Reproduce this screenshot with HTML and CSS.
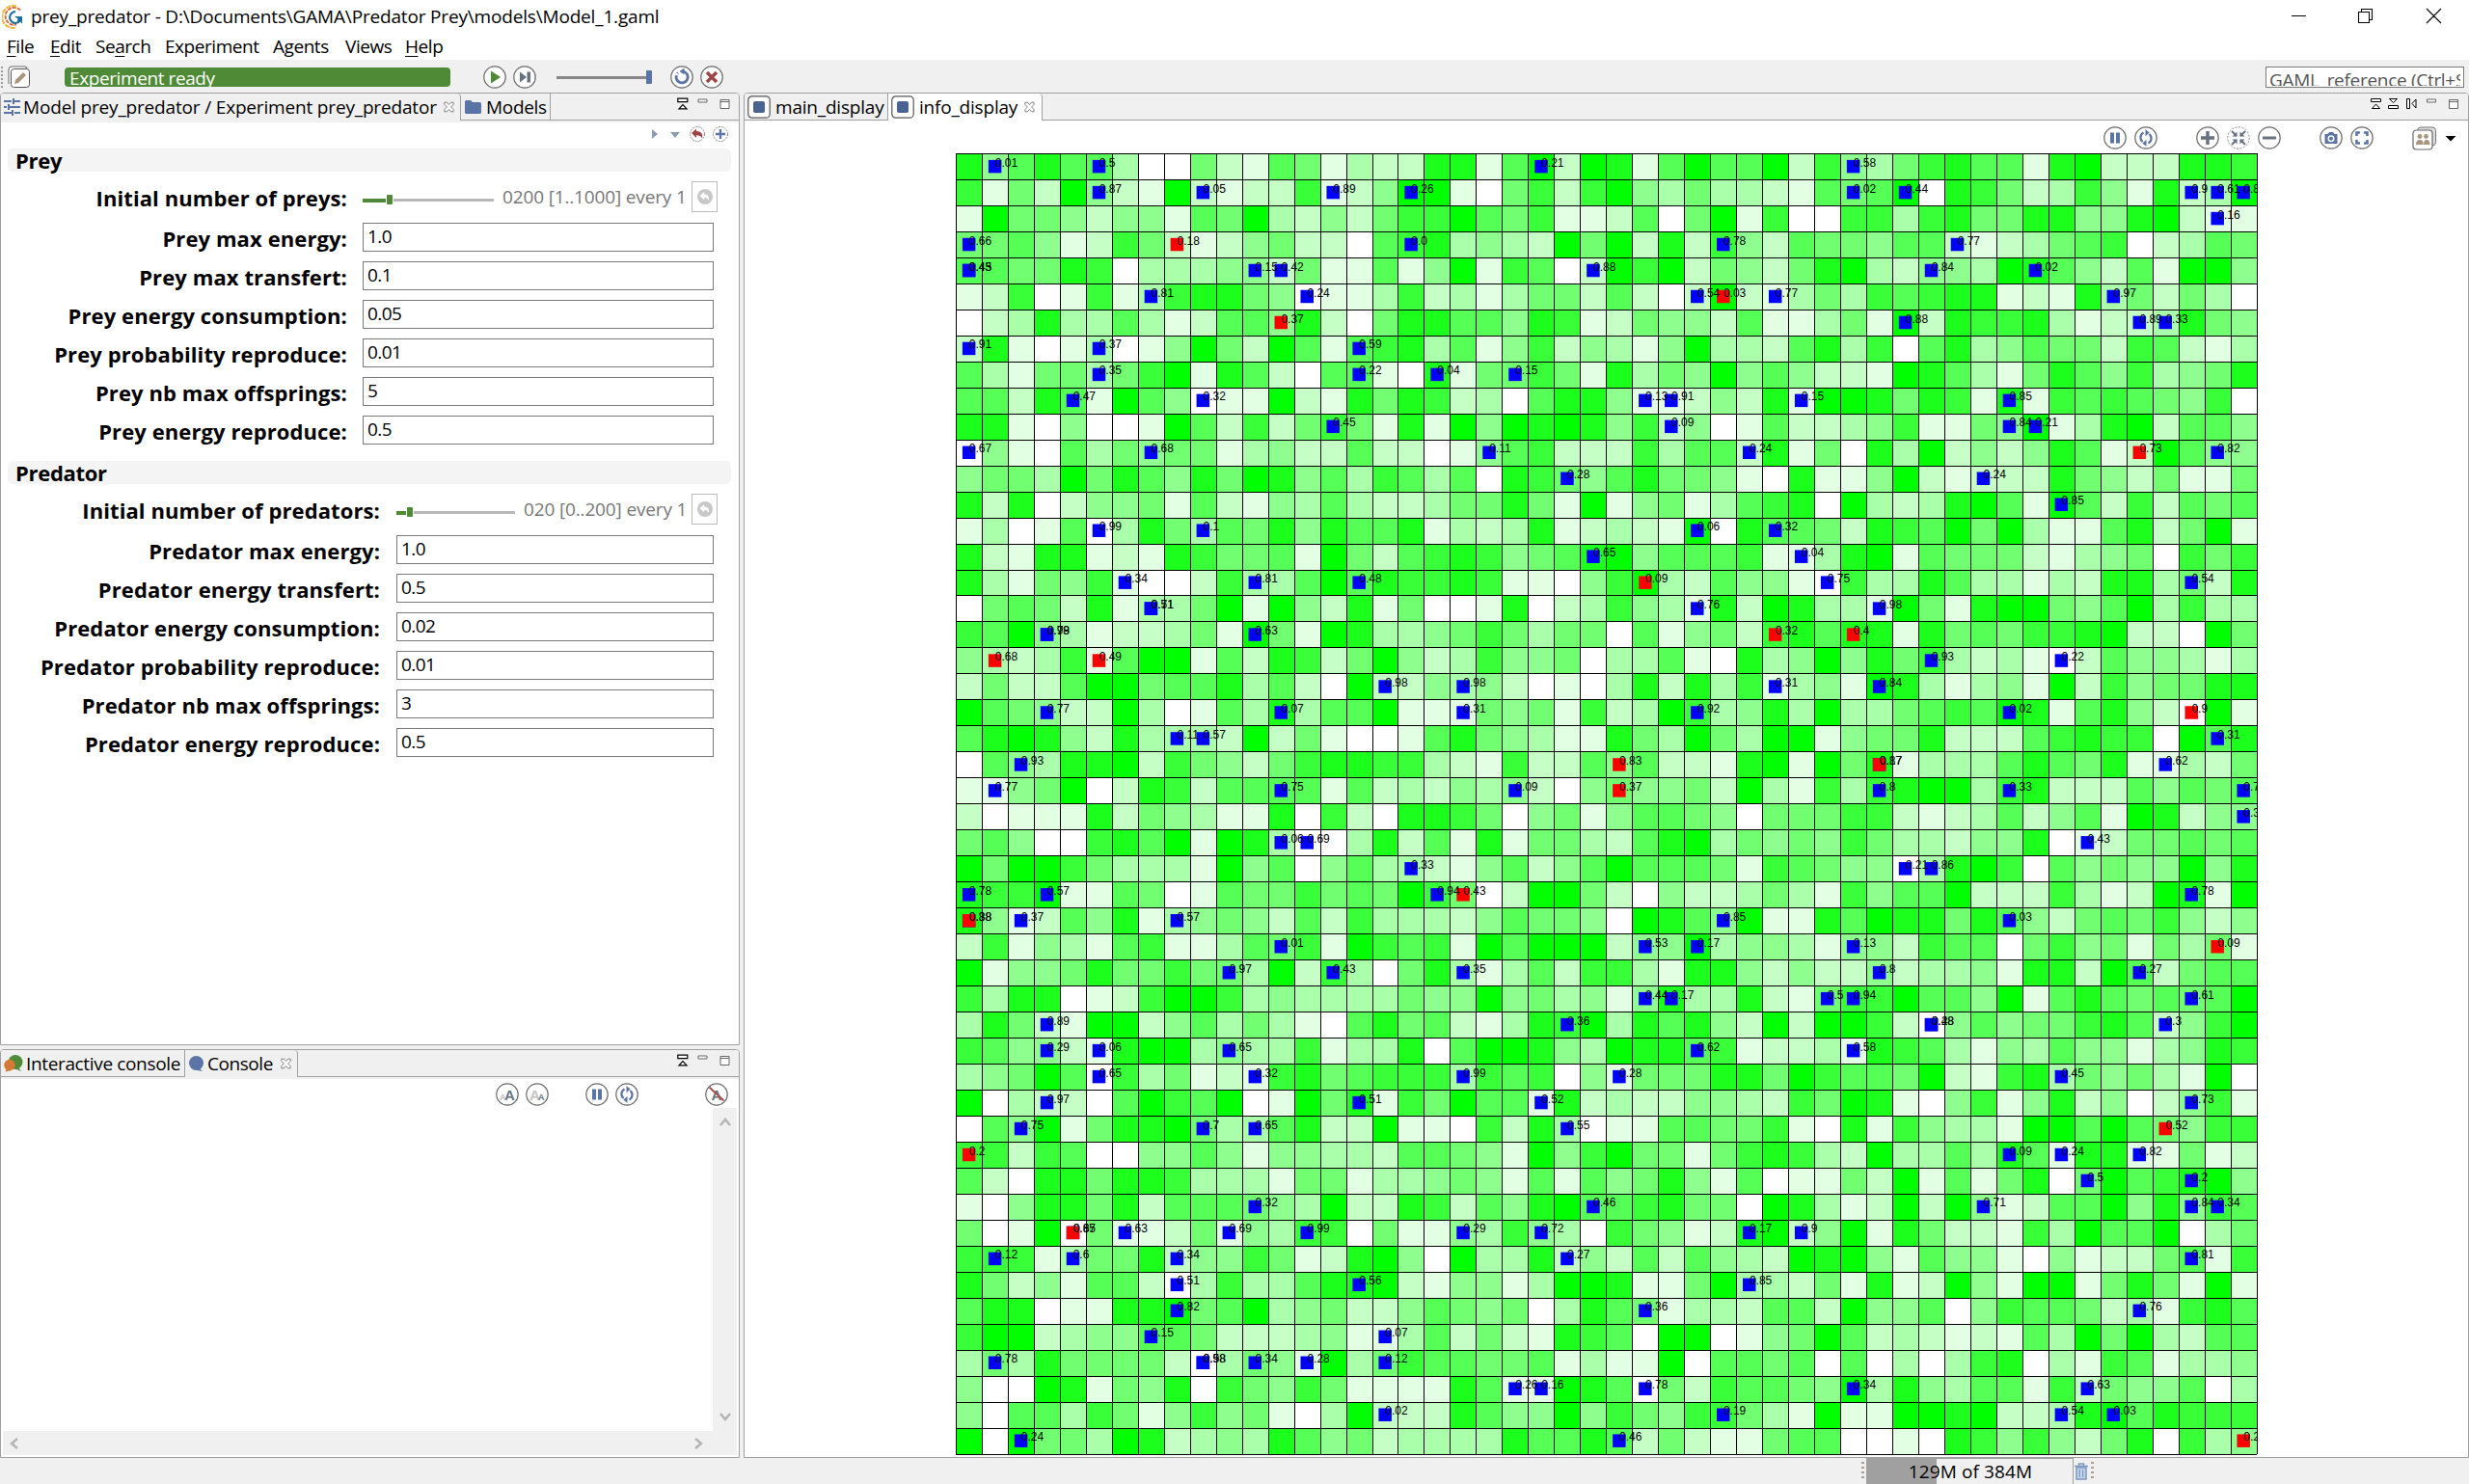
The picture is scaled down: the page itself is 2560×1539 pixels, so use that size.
FILE: index.html
```html
<!DOCTYPE html>
<html lang="en">
<head>
<meta charset="utf-8">
<title>prey_predator</title>
<link rel="stylesheet" href="styles.css">
</head>
<body>
<svg class="defs" width="0" height="0">
  <symbol id="ring" viewBox="0 0 24 24"><circle cx="12" cy="12" r="11.2" fill="#fff" stroke="#6b6b6b" stroke-width="1.2"/></symbol>
  <symbol id="pause" viewBox="0 0 24 24"><use href="#ring"/><path d="M7 6.5h4v11H7zM13 6.5h4v11h-4z" fill="#5a75a5"/></symbol>
  <symbol id="sync" viewBox="0 0 24 24"><use href="#ring"/><path d="M9.5 6.6A5.6 5.6 0 0 0 8.6 16M14.5 17.4A5.6 5.6 0 0 0 15.4 8" fill="none" stroke="#5a75a5" stroke-width="2.2"/><path d="M11.5 3v7.2L15.6 6.4zM12.5 21v-7.2L8.4 17.6z" fill="#5a75a5"/></symbol>
  <symbol id="x" viewBox="0 0 12 12"><path d="M1 .7h2.6L6 3.4 8.4.7H11v2.5L8.3 6 11 8.8v2.5H8.4L6 8.6l-2.4 2.7H1V8.8L3.7 6 1 3.2z" fill="#fff" stroke="#777" stroke-width="1"/></symbol>
  <symbol id="stackup" viewBox="0 0 12 16"><path d="M.8 1.2h10v3.4H.8zM6 7.6l4 4.2H2z" fill="#fff" stroke="#000" stroke-width="1.2"/></symbol>
  <symbol id="min" viewBox="0 0 12 16"><path d="M1 2h9v3H1z" fill="#fff" stroke="#666"/></symbol>
  <symbol id="max" viewBox="0 0 12 16"><path d="M1 2.5h9v9H1zM1 4.5h9" fill="#fff" stroke="#666"/></symbol>
  <symbol id="disp" viewBox="0 0 24 24"><rect x=".8" y=".8" width="22.4" height="22.4" rx="4" fill="#fff" stroke="#555" stroke-width="1.2"/><rect x="6" y="6" width="12" height="12" rx="2" fill="#4a6391"/></symbol>
  <symbol id="undo" viewBox="0 0 18 18"><circle cx="9" cy="9" r="8" fill="#c8c8c8"/><path d="M3.5 8L8.2 4v2.5c4 0 5.6 2.5 4.6 6.8-.7-2.6-2-3.3-4.6-3.3v2.5z" fill="#fff"/></symbol>
</svg>

<header class="title">
  <svg class="logo" width="24" height="29" viewBox="0 0 24 29">
    <path d="M15 3.500A11.500 11.500 0 1 0 15 25.500" fill="none" stroke="#f3b33d" stroke-width="2" stroke-dasharray="5 1"/>
    <path d="M19 7.500a9 9 0 1 0-4 15" fill="none" stroke="#e0662f" stroke-width="1.800" stroke-dasharray="4 1"/>
    <path d="M14 9a6 6 0 1 0 5 9.500" fill="none" stroke="#1d6f9f" stroke-width="2"/>
    <path d="M13 14h8v7.500l-2.500-2.500-3 1.500 1-4z" fill="#1d6f9f"/>
  </svg>
  <span class="cap">prey_predator - D:\Documents\GAMA\Predator Prey\models\Model_1.gaml</span>
  <svg class="win" width="170" height="18" viewBox="0 0 170 18"><path d="M1 8.500h15M70.500 4.500h11v11h-11zM73.500 4.500v-3h11v11h-3M141 1l15 15M156 1l-15 15" fill="none" stroke="#000" stroke-width="1.100"/></svg>
</header>
<nav class="menu"><span class="m1"><u>F</u>ile</span><span class="m2"><u>E</u>dit</span><span class="m3">Se<u>a</u>rch</span><span class="m4">Experiment</span><span class="m5">Agents</span><span class="m6">Views</span><span class="m7"><u>H</u>elp</span></nav>

<div class="tools">
  <svg class="edit" width="34" height="26" viewBox="0 0 34 26"><path d="M2 2v22" stroke="#999" stroke-width="2" stroke-dasharray="2 2"/><path d="M9 20V5q0-3 3-3h13q3 0 3 2" fill="#fff" stroke="#666"/><rect x="11.500" y="4.500" width="19" height="19" rx="3" fill="#fff" stroke="#555"/><path d="M15 20l1-4 8-8 3 3-8 8z" fill="#a8957c"/></svg>
  <div class="ready"><span>Experiment ready</span></div>
  <svg class="b-play" width="24" height="24"><use href="#ring"/><path d="M8 5.500l10 6.500-10 6.500z" fill="#4f8a36"/></svg>
  <svg class="b-step" width="24" height="24"><use href="#ring"/><path d="M7 6.500l7 5.500-7 5.500zM14.500 6.500h3.500v11h-3.500z" fill="#66727f"/></svg>
  <div class="speed"></div>
  <svg class="b-reload" width="24" height="24"><use href="#ring"/><path d="M13.500 6a6 6 0 1 1-5.500 1.500" fill="none" stroke="#5a75a5" stroke-width="2.800" stroke-dasharray="28 2"/><path d="M14.500 2.500v7L9.500 6z" fill="#5a75a5"/></svg>
  <svg class="b-close" width="24" height="24"><use href="#ring"/><path d="M7 7l10 10M17 7L7 17" stroke="#a04545" stroke-width="3.400"/></svg>
  <div class="search"><span>GAML_reference (Ctrl+Shift+H)</span></div>
</div>

<main>
  <div class="left">
    <section class="params">
      <div class="tabs">
        <div class="tab on t-model"><svg width="17" height="18" viewBox="0 0 17 18"><path d="M0 3h8M11 3h6M0 9h3M6 9h11M0 15h8M11 15h6M10 0v6M5 6v6M9 12v6" stroke="#5a75a5" stroke-width="2"/></svg><span class="t1">Model prey_predator / Experiment prey_predator</span><svg width="11" height="12"><use href="#x"/></svg></div>
        <div class="tab t-models"><svg width="17" height="14" viewBox="0 0 17 14"><path d="M0 1.500Q0 0 1.500 0H6l2 2h7.500Q17 2 17 3.500v9q0 1.500-1.500 1.500h-14Q0 14 0 12.500z" fill="#5a75a5"/></svg><span class="t2">Models</span></div>
        <div class="fill"><svg width="12" height="16"><use href="#stackup"/></svg><svg class="g1" width="12" height="16"><use href="#min"/></svg><svg class="g2" width="12" height="16"><use href="#max"/></svg></div>
      </div>
      <div class="vtools"><svg width="82" height="18" viewBox="0 0 82 18"><path d="M2 4l6 5-6 5zM21 7h10l-5 6z" fill="#8d9caf"/><circle cx="49" cy="9" r="7.500" fill="#fff" stroke="#888" stroke-dasharray="2 1"/><path d="M43 8l5-4.500V6c5 0 7 3 6 7.500-1-2.500-3-3.200-6-3.200V13z" fill="#a04545"/><circle cx="73" cy="9" r="7.500" fill="#fff" stroke="#888" stroke-dasharray="2 1"/><path d="M73 4v10M68 9h10" stroke="#5a75a5" stroke-width="2.400"/></svg></div>
      <div class="group"><span>Prey</span></div>
      <div class="form prey">
        <label class="srow">Initial number of preys:</label><div class="slide"><i class="bar"><b></b></i><em>0200 [1..1000] every 1</em><div class="reset"><svg width="18" height="18"><use href="#undo"/></svg></div></div>
        <label>Prey max energy:</label><div class="in">1.0</div>
        <label>Prey max transfert:</label><div class="in">0.1</div>
        <label>Prey energy consumption:</label><div class="in">0.05</div>
        <label>Prey probability reproduce:</label><div class="in">0.01</div>
        <label>Prey nb max offsprings:</label><div class="in">5</div>
        <label>Prey energy reproduce:</label><div class="in">0.5</div>
      </div>
      <div class="group second"><span>Predator</span></div>
      <div class="form pred">
        <label class="srow">Initial number of predators:</label><div class="slide"><i class="bar"><b></b></i><em>020 [0..200] every 1</em><div class="reset"><svg width="18" height="18"><use href="#undo"/></svg></div></div>
        <label>Predator max energy:</label><div class="in">1.0</div>
        <label>Predator energy transfert:</label><div class="in">0.5</div>
        <label>Predator energy consumption:</label><div class="in">0.02</div>
        <label>Predator probability reproduce:</label><div class="in">0.01</div>
        <label>Predator nb max offsprings:</label><div class="in">3</div>
        <label>Predator energy reproduce:</label><div class="in">0.5</div>
      </div>
    </section>
    <section class="console">
      <div class="tabs">
        <div class="tab t-int"><svg width="20" height="18" viewBox="0 0 20 18"><circle cx="12" cy="7.500" r="7.500" fill="#4f8a36"/><path d="M14 12l4 5-7-3z" fill="#4f8a36"/><circle cx="6" cy="10.500" r="5.800" fill="#d57a35"/><path d="M3 13l-1.500 4.500L8 16z" fill="#d57a35"/></svg><span class="t3">Interactive console</span></div>
        <div class="tab on t-con"><svg width="17" height="16" viewBox="0 0 17 16"><circle cx="8.500" cy="7.500" r="7.500" fill="#5a75a5"/><path d="M11 12l4 4-8-1.500z" fill="#5a75a5"/></svg><span class="t4">Console</span><svg width="11" height="12"><use href="#x"/></svg></div>
        <div class="fill"><svg width="12" height="16"><use href="#stackup"/></svg><svg class="g1" width="12" height="16"><use href="#min"/></svg><svg class="g2" width="12" height="16"><use href="#max"/></svg></div>
      </div>
      <div class="ctools">
        <svg class="c1" width="24" height="24"><use href="#ring"/><text x="9" y="18" font-size="15" fill="#66727f">A</text><text x="4" y="18" font-size="9" fill="#bbb">A</text></svg>
        <svg class="c2" width="24" height="24"><use href="#ring"/><text x="4" y="18" font-size="15" fill="#c4c4c4">A</text><text x="13" y="18" font-size="9" fill="#66727f">A</text></svg>
        <svg class="c3" width="24" height="24"><use href="#pause"/></svg>
        <svg class="c2" width="24" height="24"><use href="#sync"/></svg>
        <svg class="c4" width="24" height="24"><use href="#ring"/><text x="6.500" y="18" font-size="15" fill="#66727f">A</text><path d="M4.500 4.500l15 14" stroke="#a85050" stroke-width="2"/></svg>
      </div>
      <div class="cbody">
        <div class="ctext"></div>
        <div class="vbar"><svg width="12" height="10"><path d="M1 8l5-6 5 6" /></svg><svg width="12" height="10"><path d="M1 2l5 6 5-6"/></svg></div>
        <div class="hbar"><svg width="10" height="12"><path d="M8 1L2 6l6 5"/></svg><svg width="10" height="12"><path d="M2 1l6 5-6 5"/></svg></div>
      </div>
    </section>
  </div>

  <section class="display">
    <div class="tabs">
      <div class="tab t-main"><svg width="24" height="24"><use href="#disp"/></svg><span class="t5">main_display</span></div>
      <div class="tab on t-info"><svg width="24" height="24"><use href="#disp"/></svg><span class="t6">info_display</span><svg width="11" height="12"><use href="#x"/></svg></div>
      <div class="fill"><svg width="94" height="16" viewBox="0 0 94 16"><path d="M1.500 1.500h10v3h-10zM6.500 7l4 4.500h-8zM19.500 8.500h10v3h-10zM20.500 1.500h8l-4 4zM38.500 1.500h3v10h-3zM48 2v9l-4-4.500z" fill="#fff" stroke="#000"/><path d="M59.500 2h9v3h-9zM82.500 2.500h9v9h-9zM82.500 4.500h9" fill="#fff" stroke="#666"/></svg></div>
    </div>
    <div class="dtools">
      <svg width="24" height="24"><use href="#pause"/></svg>
      <svg class="d1" width="24" height="24"><use href="#sync"/></svg>
      <svg class="d2" width="24" height="24"><use href="#ring"/><path d="M12 5v14M5 12h14" stroke="#66727f" stroke-width="3.400"/></svg>
      <svg class="d1" width="24" height="24" viewBox="0 0 24 24"><circle cx="12" cy="12" r="11.200" fill="#fff" stroke="#888" stroke-dasharray="2 1.500"/><path d="M5 5l5 5M19 5l-5 5M5 19l5-5M19 19l-5-5" stroke="#66727f" stroke-width="2"/><path d="M5.500 10.500h5v-5zM18.500 10.500h-5v-5zM5.500 13.500h5v5zM18.500 13.500h-5v5z" fill="#66727f"/></svg>
      <svg class="d1" width="24" height="24"><use href="#ring"/><path d="M5 12h14" stroke="#66727f" stroke-width="3.200"/></svg>
      <svg class="d2" width="24" height="24"><use href="#ring"/><path d="M5.500 8h3l1.500-2h4l1.500 2h3v10h-13z" fill="#5a75a5"/><circle cx="12" cy="12.800" r="2.800" fill="#5a75a5" stroke="#fff" stroke-width="1.500"/></svg>
      <svg class="d1" width="24" height="24"><use href="#ring"/><path d="M6.500 10V6.500H10M14 6.500h3.500V10M17.500 14v3.500H14M10 17.500H6.500V14" fill="none" stroke="#5a75a5" stroke-width="2.600"/></svg>
      <svg class="d3" width="46" height="26" viewBox="0 0 46 26"><rect x="5.500" y="1" width="19" height="19" rx="3.500" fill="#ddd" stroke="#777"/><rect x="1" y="4" width="20" height="20" rx="3.500" fill="#fff" stroke="#666" stroke-width="1.200"/><path d="M4 19q0-5 4-5t3.500 5zM12 19q0-5 3-5 3.500 0 3.500 5z" fill="#a8957c"/><circle cx="8" cy="10.500" r="2.400" fill="#a8957c"/><circle cx="14.500" cy="10.500" r="2.400" fill="#a8957c"/><path d="M34.500 10h11L40 15.500z"/></svg>
    </div>
    <svg id="world" class="world" width="1350" height="1350"></svg>
  </section>
</main>

<footer>
  <i class="grip"></i>
  <div class="heap"><span>129M of 384M</span></div>
  <svg class="trash" width="16" height="18" viewBox="0 0 16 18"><path d="M1 3.500h14M5.500 3V1h5v2" fill="none" stroke="#7b96bd" stroke-width="1.500"/><path d="M3 5h10v12H3z" fill="#c7d6ea" stroke="#7b96bd" stroke-width="1.500"/><path d="M6.300 7v8M9.700 7v8" stroke="#7b96bd" stroke-width="1.200"/></svg>
  <i class="grip last"></i>
</footer>
<script src="world.js"></script>
</body>
</html>
```

FILE: styles.css
```css
* { box-sizing: border-box; }
body { margin: 0; width: 2560px; height: 1539px; overflow: hidden; display: flex; flex-direction: column; background: #f0f0f0; color: #000; font: 19px "Open Sans", "Noto Sans", sans-serif; }
svg { display: block; flex: none; }
.defs { position: absolute; }
span, label, em { white-space: nowrap; }

.title { height: 34px; flex: none; background: #fff; display: flex; align-items: center; padding-left: 2px; }
.logo { margin-right: 6px; }
.cap { width: 2343px; letter-spacing: -0.17px; }
.menu { height: 28px; flex: none; background: #fff; display: flex; align-items: center; padding-left: 7px; letter-spacing: -0.45px; }
.menu u { text-underline-offset: 3px; text-decoration-thickness: 1px; }
.m1 { width: 45px; } .m2 { width: 47px; } .m3 { width: 72px; } .m4 { width: 112px; } .m5 { width: 75px; } .m6 { width: 62px; }

.tools { height: 34px; flex: none; display: flex; align-items: center; padding-top: 2px; }
.edit { margin-right: 33px; }
.ready { width: 400px; height: 20px; border-radius: 4px; background: #4f8a36; color: #fff; overflow: hidden; padding-left: 5px; }
.ready span { display: block; line-height: 23px; letter-spacing: -0.4px; }
.b-play { margin-left: 34px; } .b-step { margin-left: 7px; }
.speed { width: 99px; height: 14px; margin-left: 21px; background: linear-gradient(#888, #888) 0 6px / 96px 3px no-repeat; border-right: 6px solid #5a75a5; border-radius: 1px; }
.b-reload { margin-left: 19px; } .b-close { margin-left: 7px; }
.search { margin-left: auto; margin-right: 5px; width: 206px; height: 22px; border: 1px solid #7a7a7a; background: #fff; padding: 0 3px; }
.search span { display: block; height: 19px; overflow: hidden; line-height: 27px; color: #555; letter-spacing: -0.3px; }

main { height: 1416px; flex: none; display: grid; grid-template-columns: 767px 1789px; column-gap: 4px; }
.left { display: flex; flex-direction: column; gap: 4px; }
section { border: 1px solid #a0a0a0; background: #fff; border-radius: 4px 4px 0 0; overflow: hidden; }
.params { height: 988px; flex: none; }
.console { height: 424px; display: flex; flex-direction: column; }
.tabs { height: 28px; flex: none; display: flex; background: #f0f0f0; }
.left .tabs { height: 30px; border-bottom: 2px solid #f0f0f0; }
.tab { display: flex; align-items: center; border-right: 1px solid #a0a0a0; border-bottom: 1px solid #a0a0a0; }
.tab.on { border-bottom: 0; border-radius: 0 4px 0 0; }
.fill { flex: 1; border-bottom: 1px solid #a0a0a0; display: flex; justify-content: flex-end; padding: 4px 8px 0 0; }
.g1 { margin-left: 9px; } .g2 { margin-left: 11px; }
.t-model { width: 477px; padding-left: 3px; } .t1 { width: 436px; margin-left: 3px; letter-spacing: -0.17px; }
.t-models { width: 93px; padding-left: 4px; } .t2 { margin-left: 5px; letter-spacing: -0.3px; }
.t-int { width: 191px; padding-left: 3px; } .t3 { margin-left: 3px; letter-spacing: -0.35px; }
.t-con { width: 117px; padding-left: 3px; } .t4 { width: 76px; margin-left: 3px; letter-spacing: -0.45px; }
.t-main { width: 149px; padding-left: 3px; } .t5 { margin-left: 5px; letter-spacing: -0.2px; }
.t-info { width: 160px; padding-left: 3px; background: #fff; } .t6 { width: 109px; margin-left: 5px; letter-spacing: -0.2px; }

.vtools { height: 27px; padding: 3px 10px 0 0; display: flex; justify-content: flex-end; }
.group { margin: 0 8px 0 7px; height: 24px; background: #f4f4f4; border-radius: 5px; font-weight: 700; font-size: 22px; line-height: 25px; padding-left: 8px; }
.group span { letter-spacing: -0.3px; }
.form { display: grid; grid-auto-rows: 30px; row-gap: 10px; grid-template-rows: 33px; padding-top: 10px; align-items: center; }
.prey { grid-template-columns: 359px 364px; column-gap: 16px; }
.pred { grid-template-columns: 393px 329px; column-gap: 17px; }
.form label { text-align: right; font-weight: 700; font-size: 22px; letter-spacing: 0.1px; padding-top: 1px; line-height: 26px; }
.in { height: 30px; border: 1px solid #7a7a7a; padding-left: 4px; line-height: 27px; letter-spacing: -0.6px; }
.slide { width: 368px; height: 33px; display: flex; align-items: center; color: #777; }
.pred .slide { width: 333px; }
.bar { width: 136px; height: 10px; background: linear-gradient(#4f8a36, #4f8a36) 0 4px / 24px 4px no-repeat, linear-gradient(#b8b8b8, #b8b8b8) 32px 4px / 104px 3px no-repeat; display: flex; margin-top: 5px; padding-left: 25px; }
.bar b { width: 6px; background: #4f8a36; border-radius: 1px; }
.pred .bar { width: 123px; padding-left: 11px; background: linear-gradient(#4f8a36, #4f8a36) 0 4px / 10px 4px no-repeat, linear-gradient(#b8b8b8, #b8b8b8) 18px 4px / 105px 3px no-repeat; }
.slide em { font-style: normal; flex: 1; margin: -2px 0 0 9px; letter-spacing: -0.15px; }
.reset { width: 27px; height: 32px; border: 1px solid #bbb; display: flex; align-items: center; justify-content: center; margin-top: -2px; }
.group.second { margin-top: 17px; }

.ctools { height: 30px; flex: none; padding: 4px 0 0 513px; display: flex; font-weight: 700; font-family: "Liberation Sans", sans-serif; }
.c2 { margin-left: 7px; } .c3 { margin-left: 38px; } .c4 { margin-left: 69px; }
.cbody { flex: 1; margin: 0 2px 2px 2px; display: grid; grid-template: 335px 25px / 736px 25px; background: #f0f0f0; }
.ctext { background: #fff; }
.cbody path { fill: none; stroke: #b5b5b5; stroke-width: 2.5; }
.vbar { display: flex; flex-direction: column; justify-content: space-between; align-items: center; padding: 10px 0; }
.hbar { display: flex; justify-content: space-between; align-items: center; padding: 0 10px 0 7px; }

.dtools { height: 34px; padding: 6px 12px 0 0; display: flex; justify-content: flex-end; }
.d1 { margin-left: 8px; } .d2 { margin-left: 40px; } .d3 { margin-left: 40px; }
.world { margin: 0 0 0 219px; font: 12px "Liberation Sans", Arial, sans-serif; }

footer { flex: 1; display: flex; align-items: center; padding-left: 1930px; }
.grip { width: 3px; height: 20px; background: repeating-linear-gradient(#a8a090 0 2px, transparent 2px 5px); }
.heap { margin-left: 2px; width: 215px; height: 27px; border-right: 1px solid #a0a0a0; border-top: 1px solid #a0a0a0; background: linear-gradient(90deg, #a0a0a0 73px, #f0f0f0 73px); text-align: center; line-height: 26px; padding-left: 2px; letter-spacing: 0.1px; }
.trash { margin-left: 0; } .last { margin-left: 2px; }
```

FILE: world.js
```js
// Grass level of every cell, one string per row: 0 = full green, 9 = white.
const grass = [
"1531336994783486771183070"+"1830330725642133810777112",
"2847057807877287500894272"+"0564667834309124762581760",
"8044575583406757422034288"+"7394082992262144115510788",
"4435872478754779321656704"+"0717257344533787643297634",
"3344129666557488385082397"+"0207457410675560135738005",
"8729828621145988627686447"+"3797078646232118781647469",
"9761663687335179411335128"+"7455738864807122168776145",
"7189869850470383216385275"+"6850667316293165344723786",
"3684464208137933891844248"+"1645053577801368413526541",
"3371380359880781412769311"+"5887571800141281823234529",
"1189599803727424818050101"+"5275983776528845086107335",
"9589364544865773779853277"+"7263371849160757513870355",
"5446041351401536236391245"+"3144589188507877714574884",
"1719755483785636776441480"+"8548632190676103803727343",
"8698396146341513318676187"+"6780913347123040688317408",
"1781187812443804732125431"+"0533328861083444786549242",
"1684528997266303122128895"+"2067355892661366867116471",
"9434718664080571849981976"+"2568170166804810045306266",
"2305687764804801665424644"+"9385472131181434221077904",
"5676283008371274057625549"+"6638916505142676897355686",
"7477300433163790775657989"+"6171628658016865807254411",
"0345770698361633088845482"+"7602651606643230183157908",
"3101571666707489983145688"+"1460460085441777321229031",
"9356110724574211226782773"+"5377810804186663134188674",
"8854097127333383767565795"+"4554706826210062177735343",
"7988817456881927911249548"+"5334594442278763753801755",
"4359921308016996173818446"+"7310645452466755198744343",
"0400246668053953667853753"+"0333482345596102935455051",
"1220883498344243402497004"+"7957764682533077726870180",
"1587351865457372666753445"+"9013508813011413574342575",
"7285683288634280232803000"+"7550655685572339425484648",
"0855414424460726941686372"+"2681157577576658117037433",
"2611987200265666645505465"+"8516617842203350831343430",
"6147800753646893143786120"+"6131570700279535442137520",
"2355781006566286619300156"+"0113287768123685635586512",
"6540392648782143222623295"+"8444114023340782164546809",
"0967793023098041824033817"+"6775567240189528517597528",
"9350841104663177088927169"+"8833442891825668003034522",
"2272399553585566733458052"+"0448421267066361381188487",
"3791141126668448665458383"+"5415839884708384194032105",
"8951141733345607712735103"+"3214490168707058733051523",
"4980948874856229488562569"+"2458710750814778260330964",
"2228644175524871059066175"+"7373567010583558958774382",
"1475833796266311078558600"+"1884066748187058008414808",
"3119881104306547753454961"+"3486673370553952334768213",
"2007655334777658863747812"+"3900985403767878360406733",
"6461444479645806423344386"+"8809334393969621968238665",
"5990184519245248888138801"+"3947233450615633827455396",
"5933624852548960777135505"+"2452246808800107761031222",
"0904460176561354766661331"+"3747884339989125257419265"
];

// Agents per row: "column:energy", a leading r marks a predator.
const agents = [
"1:0.01 5:0.5 22:0.21 34:0.58",
"5:0.87 9:0.05 14:0.89 17:0.26 34:0.02 36:0.44 47:0.9 48:0.61 49:0.81",
"48:0.16",
"0:0.66 r8:0.18 17:0.0 29:0.78 38:0.77",
"0:0.45 0:0.43 11:0.15 12:0.42 24:0.88 37:0.84 41:0.02",
"7:0.81 13:0.24 28:0.54 r29:0.03 31:0.77 44:0.97",
"r12:0.37 36:0.88 45:0.89 46:0.33",
"0:0.91 5:0.37 15:0.59",
"5:0.35 15:0.22 18:0.04 21:0.15",
"4:0.47 9:0.32 26:0.13 27:0.91 32:0.15 40:0.85",
"14:0.45 27:0.09 40:0.84 41:0.21",
"0:0.67 7:0.68 20:0.11 30:0.24 r45:0.73 48:0.82",
"23:0.28 39:0.24",
"42:0.85",
"5:0.99 9:0.1 28:0.06 31:0.32",
"24:0.65 32:0.04",
"6:0.34 11:0.81 15:0.48 r26:0.09 33:0.75 47:0.54",
"7:0.51 7:0.71 28:0.76 35:0.98",
"3:0.99 3:0.78 11:0.63 r31:0.32 r34:0.4",
"r1:0.68 r5:0.49 37:0.93 42:0.22",
"16:0.98 19:0.98 31:0.31 35:0.84",
"3:0.77 12:0.07 19:0.31 28:0.92 40:0.02 r47:0.9",
"8:0.11 9:0.57 48:0.31",
"2:0.93 35:0.17 r25:0.83 r35:0.87 46:0.62",
"1:0.77 12:0.75 21:0.09 r25:0.37 35:0.8 40:0.33 49:0.72",
"49:0.38",
"12:0.06 13:0.69 43:0.43",
"17:0.33 36:0.21 37:0.86",
"0:0.78 3:0.57 18:0.94 r19:0.43 47:0.78",
"0:0.88 r0:0.38 2:0.37 8:0.57 29:0.85 40:0.03",
"12:0.01 26:0.53 28:0.17 34:0.13 r48:0.09",
"10:0.97 14:0.43 19:0.35 35:0.8 45:0.27",
"26:0.44 27:0.17 33:0.5 34:0.94 47:0.61",
"3:0.89 23:0.36 37:0.28 37:0.48 46:0.3",
"3:0.29 5:0.06 10:0.65 28:0.62 34:0.58",
"5:0.65 11:0.32 19:0.99 25:0.28 42:0.45",
"3:0.97 15:0.51 22:0.52 47:0.73",
"2:0.75 9:0.7 11:0.65 23:0.55 r46:0.52",
"r0:0.2 40:0.09 42:0.24 45:0.82",
"43:0.5 47:0.2",
"11:0.32 24:0.46 39:0.71 47:0.84 48:0.34",
"4:0.67 r4:0.85 6:0.63 10:0.69 13:0.99 19:0.29 22:0.72 30:0.17 32:0.9",
"1:0.12 4:0.6 8:0.34 23:0.27 47:0.81",
"8:0.51 15:0.56 30:0.85",
"8:0.82 26:0.36 45:0.76",
"7:0.15 16:0.07",
"1:0.78 9:0.98 9:0.58 11:0.34 13:0.28 16:0.12",
"21:0.26 22:0.16 26:0.78 34:0.34 43:0.63",
"16:0.02 29:0.19 42:0.54 44:0.03",
"2:0.24 25:0.46 r49:0.22"
];

const S = 26.97;
const edge = i => Math.round(i * S);
let out = '';
grass.forEach((row, r) => {
  [...row].forEach((d, c) => {
    const v = Math.round(d * 28.33);
    out += `<rect x="${edge(c)}" y="${edge(r)}" width="${edge(c + 1) - edge(c)}" height="${edge(r + 1) - edge(r)}" fill="rgb(${v},255,${v})"/>`;
  });
});
let lines = '';
for (let i = 0; i <= 50; i++) {
  const p = edge(i) + 0.5;
  lines += `M${p} 0V1349M0 ${p}H1349`;
}
out += `<path d="${lines}" stroke="#000" fill="none"/>`;
let marks = '', labels = '';
agents.forEach((row, r) => row.split(' ').forEach(a => {
  const [pos, e] = a.split(':');
  const c = +pos.replace('r', '');
  const x = (c + 0.5) * S, y = (r + 0.5) * S;
  marks += `<rect x="${x - 6.6}" y="${y - 6.6}" width="13.5" height="13.5" fill="${pos[0] === 'r' ? '#f00' : '#00f'}"/>`;
  labels += `<text x="${x + 0.3}" y="${y + 0.2}">${e}</text>`;
}));
document.getElementById('world').innerHTML = out + marks + labels;
```
